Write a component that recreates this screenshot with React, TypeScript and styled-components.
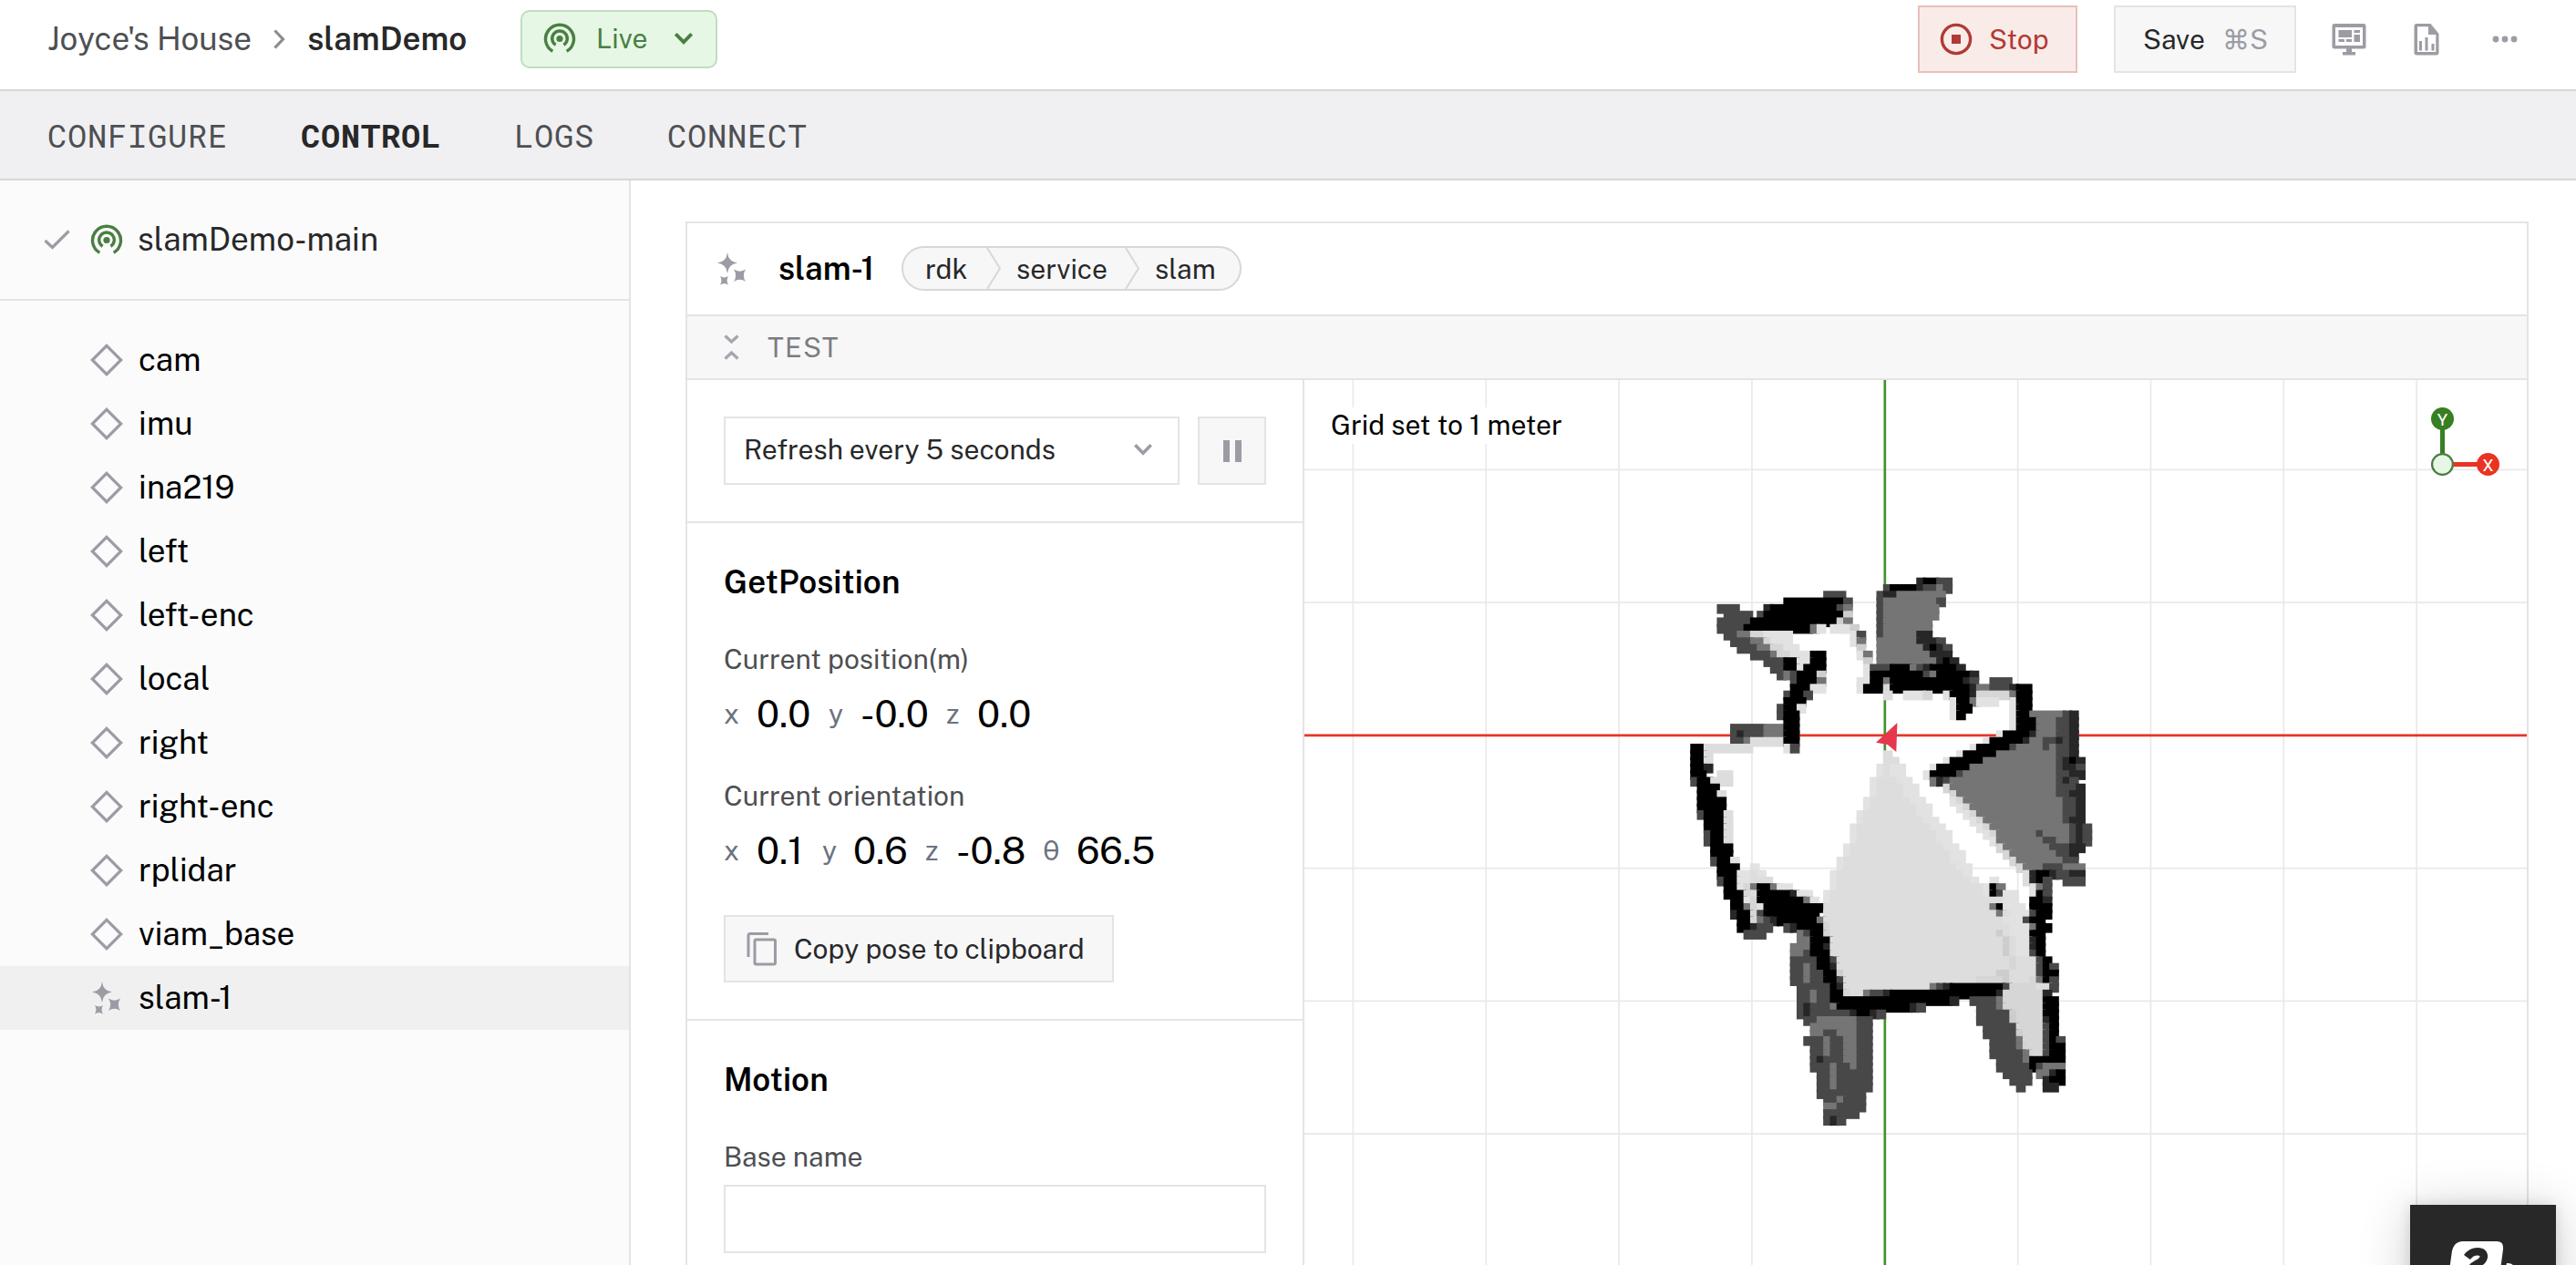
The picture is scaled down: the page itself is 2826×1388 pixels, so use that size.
import React from "react";
import styled, { createGlobalStyle } from "styled-components";

const GlobalStyle = createGlobalStyle`
  * { box-sizing: border-box; }
  html, body { margin: 0; background: #fff; }
  body {
    font-family: "Public Sans", "Inter", "Liberation Sans", sans-serif;
    color: #282829;
    overflow: hidden;
  }
  button { font-family: inherit; }
  svg { display: block; flex: none; }
`;

const Page = styled.div`
  display: flex;
  flex-direction: column;
  width: 100vw;
  height: 100vh;
  overflow: hidden;
`;

const Text = styled.span<{ $size?: number; $weight?: number; $track?: number; $color?: string }>`
  font-size: ${(p) => p.$size ?? 30}px;
  font-weight: ${(p) => p.$weight ?? 400};
  letter-spacing: ${(p) => p.$track ?? 0}px;
  color: ${(p) => p.$color ?? "#282829"};
  line-height: 44px;
  white-space: nowrap;
`;

/* Header */

const TopBar = styled.header`
  display: flex;
  align-items: center;
  flex: none;
  height: 100px;
  padding: 0 65px 12px 52px;
  border-bottom: 2px solid #d7d7d9;
`;

const Crumbs = styled.div`
  display: flex;
  align-items: center;
  width: 519px;
  gap: 24px;
`;

const LiveButton = styled.button`
  display: flex;
  align-items: center;
  width: 216px;
  height: 64px;
  padding: 0 25px 2px 23px;
  border: 2px solid #bfddbf;
  border-radius: 10px;
  background: #e6f8e5;
`;

const LiveLabel = styled(Text)`
  flex: 1;
  padding-left: 22px;
  text-align: left;
`;

const Actions = styled.div`
  display: flex;
  align-items: center;
  margin-left: auto;
`;

const ActionButton = styled.button<{ $danger?: boolean }>`
  display: flex;
  align-items: center;
  height: 74px;
  width: ${(p) => (p.$danger ? 175 : 200)}px;
  margin-right: ${(p) => (p.$danger ? 40 : 39)}px;
  padding: 0 0 0 ${(p) => (p.$danger ? 22 : 30)}px;
  gap: ${(p) => (p.$danger ? 18 : 19)}px;
  border: 2px solid ${(p) => (p.$danger ? "#e8bfbc" : "#e4e4e6")};
  background: ${(p) => (p.$danger ? "#f9ece8" : "#f7f7f8")};
`;

const IconGroup = styled.div`
  display: flex;
  align-items: center;
  width: 203px;
`;

const FileIconBox = styled.div`
  margin: 0 58px 0 52px;
`;

const Tabs = styled.nav`
  display: flex;
  align-items: center;
  flex: none;
  height: 98px;
  gap: 80px;
  padding: 1px 0 0 52px;
  background: #f0f0f2;
  border-bottom: 2px solid #d7d7d9;
`;

const Tab = styled.a<{ $active?: boolean }>`
  font-family: "Roboto Mono", "Noto Sans Mono", "DejaVu Sans Mono", monospace;
  font-size: 35.5px;
  letter-spacing: 0.7px;
  font-weight: ${(p) => (p.$active ? 700 : 400)};
  color: ${(p) => (p.$active ? "#282829" : "#4e4f52")};
`;

/* Sidebar */

const Main = styled.div`
  display: flex;
  flex: 1;
  min-height: 0;
`;

const Sidebar = styled.aside`
  flex: none;
  width: 692px;
  background: #fbfbfc;
  border-right: 2px solid #e4e4e6;
`;

const MachineRow = styled.div`
  display: flex;
  align-items: center;
  height: 132px;
  padding-left: 48px;
  border-bottom: 2px solid #e4e4e8;
`;

const MachineIcon = styled.div`
  margin: 0 16px 0 22px;
`;

const ResourceList = styled.ul`
  margin: 0;
  padding: 30px 0 0;
  list-style: none;
`;

const Resource = styled.li<{ $selected?: boolean }>`
  display: flex;
  align-items: center;
  height: 70px;
  padding-left: 99px;
  gap: 17px;
  background: ${(p) => (p.$selected ? "#f0f0f0" : "transparent")};
`;

/* Card */

const Content = styled.main`
  display: flex;
  flex: 1;
  min-width: 0;
  padding: 45px 52px 0 60px;
`;

const Card = styled.section`
  display: flex;
  flex-direction: column;
  flex: 1;
  min-width: 0;
  border: 2px solid #e4e4e6;
  border-bottom: 0;
`;

const CardHeader = styled.div`
  display: flex;
  align-items: center;
  flex: none;
  height: 102px;
  padding: 0 0 1px 31px;
  border-bottom: 2px solid #e4e4e6;
`;

const CardTitle = styled(Text)`
  width: 135px;
  margin-left: 33px;
`;

const Pill = styled.div`
  display: flex;
  align-items: stretch;
  width: 373px;
  height: 49px;
  border: 2px solid #d7d7d9;
  border-radius: 25px;
  background: #f7f7f8;
  overflow: hidden;
`;

const PillPart = styled.span<{ $width: number; $inset: number }>`
  display: flex;
  align-items: center;
  width: ${(p) => p.$width}px;
  padding-left: ${(p) => p.$inset}px;
`;

const TestBar = styled.div`
  display: flex;
  align-items: center;
  flex: none;
  height: 70px;
  padding-left: 40px;
  gap: 31px;
  background: #f7f7f8;
  border-bottom: 2px solid #e4e4e6;
`;

const CardBody = styled.div`
  display: flex;
  flex: 1;
  min-height: 0;
`;

const Panel = styled.div`
  flex: none;
  width: 677px;
  border-right: 2px solid #e4e4e6;
`;

const RefreshRow = styled.div`
  display: flex;
  gap: 20px;
  height: 157px;
  padding: 40px 40px 0;
  border-bottom: 2px solid #e4e4ea;
`;

const Select = styled.div`
  display: flex;
  align-items: center;
  justify-content: space-between;
  width: 500px;
  height: 75px;
  padding: 0 28px 3px 20px;
  border: 2px solid #e4e4e6;
`;

const PauseButton = styled.button`
  display: flex;
  align-items: center;
  justify-content: center;
  width: 75px;
  height: 75px;
  padding: 0;
  border: 2px solid #e4e4e6;
  background: #f7f7f8;
`;

const PositionSection = styled.div`
  height: 546px;
  padding: 43px 40px 0;
  border-bottom: 2px solid #e4e4ea;
`;

const MotionSection = styled.div`
  padding: 43px 40px 0;
`;

const SectionTitle = styled.h3`
  margin: 0;
  font-size: 35px;
  font-weight: 600;
  line-height: 44px;
  letter-spacing: 0.1px;
  color: #000;
`;

const FieldLabel = styled.div<{ $gap: number }>`
  margin-top: ${(p) => p.$gap}px;
  font-size: 30px;
  line-height: 44px;
  color: #4e4f52;
`;

const Readings = styled.div`
  display: flex;
  align-items: center;
  height: 60px;
  margin-top: 8px;
`;

const Axis = styled.span<{ $width: number }>`
  width: ${(p) => p.$width}px;
  flex: none;
  font-size: 30px;
  color: #6b7280;
`;

const Value = styled.span<{ $width: number }>`
  width: ${(p) => p.$width}px;
  flex: none;
  font-size: 41px;
  color: #000;
  white-space: nowrap;
`;

const CopyButton = styled.button`
  display: flex;
  align-items: center;
  width: 428px;
  height: 74px;
  margin-top: 41px;
  padding: 0 0 0 23px;
  gap: 18px;
  border: 2px solid #e4e4e6;
  background: #f7f7f8;
`;

const Input = styled.input`
  display: block;
  width: 595px;
  height: 75px;
  margin-top: 9px;
  border: 2px solid #e4e4e6;
  background: #fff;
`;

const Viewport = styled.div`
  position: relative;
  flex: 1;
  min-width: 0;
  overflow: hidden;
`;

const GridLabel = styled.div`
  position: absolute;
  left: 21px;
  top: 30px;
  height: 40px;
  padding: 0 8px;
  background: #fff;
  font-size: 30px;
  line-height: 39px;
  color: #000;
`;

const Gizmo = styled.svg`
  position: absolute;
  left: 1230px;
  top: 24px;
`;

const HelpWidget = styled.div`
  position: fixed;
  left: 2644px;
  top: 1322px;
  width: 160px;
  height: 160px;
  padding: 40px 0 0 42px;
  background: #282829;
  box-shadow: 0 6px 56px rgba(0, 0, 0, 0.2), 0 0 16px rgba(0, 0, 0, 0.12);
`;

/* Icons */

const LiveIcon = () => (
  <svg width="36" height="36" viewBox="0 0 36 36" fill="none" stroke="#4a7f42" strokeWidth="3.4">
    <circle cx="18" cy="18.5" r="3.6" fill="#4a7f42" stroke="none" />
    <path d="M13.6 25.3a8.3 8.3 0 1 1 8.8 0" />
    <path d="M10.3 32.2a15.5 15.5 0 1 1 15.4 0" />
  </svg>
);

const Chevron = ({ color, width, height, stroke = 3.6 }: { color: string; width: number; height: number; stroke?: number }) => (
  <svg width={width} height={height} viewBox={`0 0 ${width} ${height}`} fill="none" stroke={color} strokeWidth={stroke}>
    <path d={`M1.3 1.3L${width / 2} ${height - 2.8}L${width - 1.3} 1.3`} />
  </svg>
);

const DiamondIcon = () => (
  <svg width="36" height="36" viewBox="0 0 36 36" fill="none" stroke="#9c9ca4" strokeWidth="3.2">
    <path d="M18 2.3L33.7 18L18 33.7L2.3 18z" />
  </svg>
);

const SparkleIcon = () => (
  <svg width="36" height="36" viewBox="0 0 36 36" fill="#9c9ca4">
    <path d="M13 0Q14 10.2 24 11.6Q14 13 13 23Q12 13 2 11.6Q12 10.2 13 0z" />
    <path d="M20 18.5Q26.5 22.8 33 18.5Q28.7 25.200 33 32Q26.500 27.600 20 32Q24.300 25.200 20 18.500z" />
    <path d="M5 26Q9.500 28.800 14 26Q11.200 30.700 14 35.500Q9.500 32.500 5 35.500Q7.800 30.700 5 26z" />
  </svg>
);

const PillChevron = () => (
  <svg width="16" height="45" viewBox="0 0 16 45" fill="none" stroke="#d7d7d9" strokeWidth="2">
    <path d="M1 0L15 22.5L1 45" />
  </svg>
);

/* Occupancy map: each segment is "first column" followed by shade runs */

const SHADES: Record<string, string> = {
  K: "#000000", D: "#272727", G: "#484848", M: "#757575",
  c: "#cdcdcd", d: "#d6d6d6", e: "#dddddd", f: "#e2e2e2",
};

const MAP_ROWS: string[] = [
  "34 DK2G2",
  "30 | 29 GK4DG2MG",
  "20 G3|28 GD2M7",
  "14 K9G|28 GM8G",
  "4 G3|11 DK10GM|28 GM8",
  "5 G4|10 GK12c|28 GM8",
  "4 G5K13cM|28 GM7",
  "4 G4K10Mf|21 f2fc|28 GM7",
  "5 G2M2d2f4|24 fG|28 GM5D2",
  "6 G3M2df3|24 fM|28 M6D3G",
  "7 G3M2d2f2|25 c|28 M7DKDG",
  "9 G3Md2f3K2|25 fM|28 M8D3",
  "11 G3K2f2K2|26 c|28 M9DKD",
  "12 G2K2fK3|26 fG3K3MGDK4D",
  "13 GMGK3c|26 fK8GMK5D",
  "15 GK3M|25 f2K2MK11DG|45 G3",
  "15 K3f2|25 fK3dK12DM2G3DK2",
  "14 GK2G|29 e|32 f3d|38 fK3Dd5MK2",
  "14 K3|39 fK2Mf3|48 fK2",
  "13 GK2f|39 fK2|48 fK2",
  "13 GK2|39 fK|48 fK2M5GD",
  "14 K2|48 fK3M3G2D",
  "6 G5M3K2|48 fK3M3G2D",
  "6 GDG3M3K2|46 fK4DM3G2D",
  "6 G2Me5K2|44 fK5DM2G2DGD",
  "0 K2e7|14 fG|42 fK5GM4GMG2D",
  "0 K2e|29 e|40 fK5M9G2D",
  "0 K2e|29 e2|38 fK5M11GDKD",
  "0 K2D|28 fef2|36 fK5M13GD2G",
  "0 K2|4 e2|28 fef2|35 fK4GM14G2D2",
  "0 GK2e3|27 fe3f2|36 MDGM16GDG",
  "1 K3|27 fe4f2|38 dM16G3D",
  "1 K3e|27 fe4f2|39 dM15G2D2",
  "1 K4|26 fe6f2|39 fdM15G2D",
  "1 K4|26 fe7f2|40 fdM14G2D",
  "1 GK3e|25 fe8f2|41 fdM13G2D",
  "2 K3e|25 fe9f2|42 fdM12GD2",
  "2 K3e|24 fe11f2|43 fdM12GDG",
  "2 GK2e|24 fe12f2|44 fdM6GM4GDG",
  "2 GK2e|24 fe12f2|45 fM7G2M2GDG",
  "3 K3|23 fe14f2|46 dM7G3D2",
  "3 K3|23 fe15f2|47 dM7G2D",
  "3 GK2f|22 fe16f2|48 dM7G2",
  "4 K3|9 f|22 fe17f2|49 dM3G3M3",
  "4 K3f2ef|21 fe19f|50 eDK2DG2D2",
  "4 GK2f2e3|21 fe20f|45 f|50 eDKG|56 G3",
  "5 K2fdMK2Mf2|21 fe22fKM|51 fMG",
  "5 K3deK5Df2|20 fe23fKGf2|51 fKG",
  "6 K2fdK7Mf|20 fe26f2|51 K2D",
  "6 K2MdfK9|20 e25MKf3|51 K3",
  "6 DK2dGK8|20 e26Mef3GK2",
  "7 K2dMGDK6Me27f3GK2",
  "7 K2DG2|14 GDK4de27f3MK2",
  "8 G3|16 MGK2de25cef3K2",
  "16 M2K3e26cef2DK",
  "15 M3K2De26cef2DK",
  "15 M2GK3e26cef2GK",
  "15 G4K2Ge25ede3GK",
  "15 G2MGK2De25ede3GKG",
  "15 G2MG2K2ce23c2e4GK2",
  "15 G2MG2K2Ge20d4ce3dMKG",
  "16 G5KDe13MGDK8Gd4e2G",
  "16 G2MG2K2de2MG2DK16Dd6D",
  "16 G2MG2K18D|42 G4Md6K2",
  "16 GDG3MK11DG|43 G3Md6K2",
  "16 GDG6DK2DG|43 G5cd4K2",
  "17 G2M6G2|43 G5cd4DK",
  "18 M7G2|44 G5d3dGK",
  "18 M2G2M3G2|44 G5cd3GK",
  "17 G3MG2M2G2|45 G4Md3GKG",
  "18 G2MG2M2G2|45 G4Md3GK2",
  "18 G2MG2M2G2|45 G5Md2GK2",
  "18 GDG3M2G2|46 G4MK5",
  "18 G3MG2MG2|46 G5KGM3",
  "19 G2MG5|47 G4|52 M2DK",
  "19 G2MG5|48 G3|53 DK2",
  "19 G2MG5|49 G|53 D2",
  "19 G7",
  "20 G2MG3",
  "20 M2G4",
  "20 G5",
  "20 GDG",
];

const CELL = 7.2927;
const POINT = 10.7;

function mapRects() {
  const rects: React.ReactElement[] = [];
  MAP_ROWS.forEach((row, j) => {
    row.split("|").forEach((segment) => {
      const [start, runs = ""] = segment.trim().split(" ");
      let col = Number(start);
      for (const [, shade, count] of runs.matchAll(/([A-Za-z])(\d*)/g)) {
        const n = count ? Number(count) : 1;
        rects.push(
          <rect
            key={`${j}-${col}`}
            x={423.3 + col * CELL}
            y={216.7 + j * CELL}
            width={(n - 1) * CELL + POINT}
            height={POINT}
            fill={SHADES[shade]}
          />,
        );
        col += n;
      }
    });
  });
  return rects;
}

const gridX = [-4, -3, -2, -1, 1, 2, 3, 4].map((i) => 636.8 + i * 145.85);
const gridY = [-2, -1, 1, 2, 3].map((i) => 389.8 + i * 145.75);

const SlamMap = () => (
  <svg width="1341" height="971" viewBox="0 0 1341 971">
    <g stroke="#e9e9e9" strokeWidth="1.7">
      {gridX.map((x) => <line key={x} x1={x} y1="0" x2={x} y2="971" />)}
      {gridY.map((y) => <line key={y} x1="0" y1={y} x2="1341" y2={y} />)}
    </g>
    <line x1="636.8" y1="0" x2="636.8" y2="971" stroke="#43922f" strokeWidth="2.7" />
    <line x1="0" y1="389.8" x2="1341" y2="389.8" stroke="#e5352b" strokeWidth="2.7" />
    <g>{mapRects()}</g>
    <path d="M650.4 376L627 397.7L639.7 400L649.3 408z" fill="#e5384f" />
  </svg>
);

const resources = ["cam", "imu", "ina219", "left", "left-enc", "local", "right", "right-enc", "rplidar", "viam_base"];

export default function App() {
  return (
    <Page>
      <GlobalStyle />
      <TopBar>
        <Crumbs>
          <Text $size={35} $color="#4e4f52">Joyce's House</Text>
          <svg width="13" height="22" viewBox="0 0 13 22" fill="none" stroke="#8b8b90" strokeWidth="3.2">
            <path d="M1.5 1.5L10.5 11L1.5 20.5" />
          </svg>
          <Text $size={35} $weight={600}>slamDemo</Text>
        </Crumbs>
        <LiveButton>
          <LiveIcon />
          <LiveLabel $color="#4a7f42">Live</LiveLabel>
          <Chevron color="#4a7f42" width={20} height={13} stroke={3.8} />
        </LiveButton>
        <Actions>
          <ActionButton $danger>
            <svg width="36" height="36" viewBox="0 0 36 36" fill="none">
              <circle cx="18" cy="18" r="15.6" stroke="#b13a36" strokeWidth="3.4" />
              <rect x="13" y="13" width="10" height="10" fill="#b13a36" />
            </svg>
            <Text $color="#b13a36">Stop</Text>
          </ActionButton>
          <ActionButton>
            <Text>Save</Text>
            <Text $color="#9c9ca4">⌘S</Text>
          </ActionButton>
          <IconGroup>
            <svg width="38" height="36" viewBox="0 0 38 36" fill="#9c9ca4">
              <path fillRule="evenodd" d="M3 1H35Q37.5 1 37.5 3.5V26Q37.5 28.5 35 28.5H22V32H26V35.5H12V32H16V28.5H3Q.5 28.5 .5 26V3.5Q.5 1 3 1zM4 5V25H34V5z" />
              <path d="M7.500 8h14.500v8h-14.500zM24.500 8h6.500v3h-6.500zM24.500 13h6.500v8h-6.500zM7.500 18h6.500v3h-6.500zM16 18h6v3h-6z" />
            </svg>
            <FileIconBox>
              <svg width="28" height="36" viewBox="0 0 28 36" fill="#9c9ca4">
                <path fillRule="evenodd" d="M3 1H18.500L27.500 12V32.500Q27.500 35.500 24.500 35.500H3Q.5 35.500 .5 32.500V4Q.5 1 3 1zM4 4.300V32H24.300V13H16V4.300z" />
                <path d="M6 20h3v10.500H6zM12.500 16h3v14.500h-3zM19.500 23h3v7.500h-3z" />
              </svg>
            </FileIconBox>
            <svg width="28" height="8" viewBox="0 0 28 8" fill="#9c9ca4">
              <circle cx="4" cy="4" r="3.400" />
              <circle cx="14" cy="4" r="3.400" />
              <circle cx="24" cy="4" r="3.400" />
            </svg>
          </IconGroup>
        </Actions>
      </TopBar>
      <Tabs>
        <Tab>CONFIGURE</Tab>
        <Tab $active>CONTROL</Tab>
        <Tab>LOGS</Tab>
        <Tab>CONNECT</Tab>
      </Tabs>
      <Main>
        <Sidebar>
          <MachineRow>
            <svg width="29" height="22" viewBox="0 0 29 22" fill="none" stroke="#9c9ca4" strokeWidth="3.200">
              <path d="M1.500 12L9.500 19.500L27.500 1.500" />
            </svg>
            <MachineIcon><LiveIcon /></MachineIcon>
            <Text $size={35}>slamDemo-main</Text>
          </MachineRow>
          <ResourceList>
            {resources.map((name) => (
              <Resource key={name}>
                <DiamondIcon />
                <Text $size={35} $color="#000">{name}</Text>
              </Resource>
            ))}
            <Resource $selected>
              <SparkleIcon />
              <Text $size={35} $color="#000">slam-1</Text>
            </Resource>
          </ResourceList>
        </Sidebar>
        <Content>
          <Card>
            <CardHeader>
              <SparkleIcon />
              <CardTitle $size={35} $weight={600} $color="#000">slam-1</CardTitle>
              <Pill>
                <PillPart $width={91} $inset={24}><Text>rdk</Text></PillPart>
                <PillChevron />
                <PillPart $width={136} $inset={17}><Text>service</Text></PillPart>
                <PillChevron />
                <PillPart $width={110} $inset={17}><Text>slam</Text></PillPart>
              </Pill>
            </CardHeader>
            <TestBar>
              <svg width="17" height="28" viewBox="0 0 17 28" fill="none" stroke="#a6a6ad" strokeWidth="3.300">
                <path d="M1.500 1.500L8.500 8L15.500 1.500M1.500 26.500L8.500 20L15.500 26.500" />
              </svg>
              <Text $track={1.2} $color="#7c7c80">TEST</Text>
            </TestBar>
            <CardBody>
              <Panel>
                <RefreshRow>
                  <Select>
                    <Text>Refresh every 5 seconds</Text>
                    <Chevron color="#9c9ca4" width={20} height={13} />
                  </Select>
                  <PauseButton>
                    <svg width="20" height="24" viewBox="0 0 20 24" fill="#9c9ca4">
                      <rect width="7" height="24" />
                      <rect x="13" width="7" height="24" />
                    </svg>
                  </PauseButton>
                </RefreshRow>
                <PositionSection>
                  <SectionTitle>GetPosition</SectionTitle>
                  <FieldLabel $gap={40}>Current position(m)</FieldLabel>
                  <Readings>
                    <Axis $width={36}>x</Axis><Value $width={79}>0.0</Value>
                    <Axis $width={35}>y</Axis><Value $width={94}>-0.0</Value>
                    <Axis $width={34}>z</Axis><Value $width={80}>0.0</Value>
                  </Readings>
                  <FieldLabel $gap={38}>Current orientation</FieldLabel>
                  <Readings>
                    <Axis $width={36}>x</Axis><Value $width={72}>0.1</Value>
                    <Axis $width={34}>y</Axis><Value $width={79}>0.6</Value>
                    <Axis $width={34}>z</Axis><Value $width={95}>-0.8</Value>
                    <Axis $width={37}>θ</Axis><Value $width={84}>66.5</Value>
                  </Readings>
                  <CopyButton>
                    <svg width="34" height="40" viewBox="0 0 34 40" fill="none" stroke="#9c9ca4" strokeWidth="3">
                      <path d="M24 3.500H4Q2 3.500 2 5.500V29" />
                      <rect x="9" y="10" width="22.500" height="27" rx="1.500" />
                    </svg>
                    <Text>Copy pose to clipboard</Text>
                  </CopyButton>
                </PositionSection>
                <MotionSection>
                  <SectionTitle>Motion</SectionTitle>
                  <FieldLabel $gap={40}>Base name</FieldLabel>
                  <Input />
                </MotionSection>
              </Panel>
              <Viewport>
                <SlamMap />
                <GridLabel>Grid set to 1 meter</GridLabel>
                <Gizmo width="90" height="90" viewBox="0 0 90 90" fontFamily="Roboto, sans-serif" fontSize="19" textAnchor="middle">
                  <path d="M18.500 18V68" stroke="#377f22" strokeWidth="5" />
                  <path d="M18.500 68.500H68" stroke="#ea3323" strokeWidth="5" />
                  <circle cx="18.500" cy="18.500" r="12.500" fill="#377f22" />
                  <circle cx="68.500" cy="68.500" r="12.500" fill="#ea3323" />
                  <circle cx="18.500" cy="68.500" r="11.400" fill="#e6f8e5" stroke="#4a7f42" strokeWidth="2.300" />
                  <text x="18.500" y="26" fill="#fff">Y</text>
                  <text x="68.500" y="76" fill="#fff">X</text>
                </Gizmo>
              </Viewport>
            </CardBody>
          </Card>
        </Content>
      </Main>
      <HelpWidget>
        <svg width="80" height="60" viewBox="0 0 80 60">
          <path d="M16 0H53Q61 0 60 9L54 54H-2L3.500 14Q5 0 16 0z" fill="#fff" />
          <path d="M20.500 17.500Q25 11.200 32 11.200Q39.500 11.200 38.700 17.500Q38 22 31 25Q25 28 24 34" fill="none" stroke="#282829" strokeWidth="8.600" />
          <path d="M64 24H66Q73 24.500 73 32H62z" fill="#fff" />
        </svg>
      </HelpWidget>
    </Page>
  );
}
